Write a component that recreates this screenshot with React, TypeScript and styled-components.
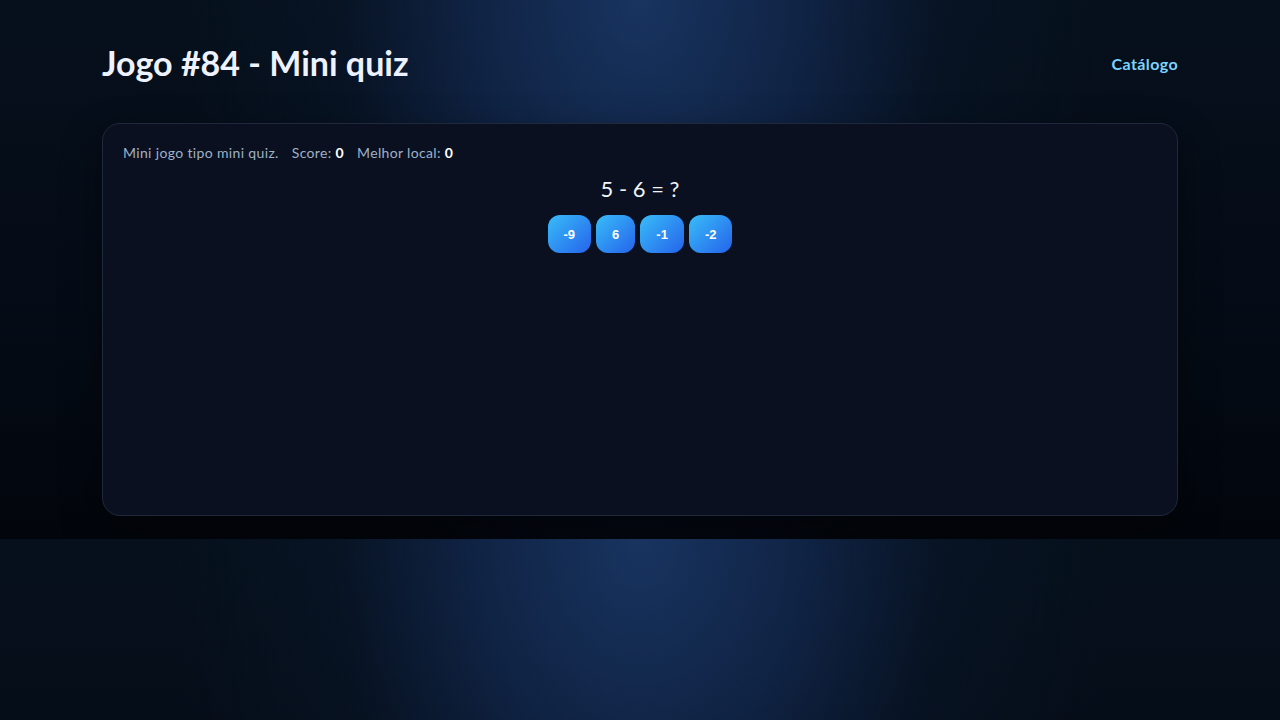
import * as React from "react";
import styled, { createGlobalStyle } from "styled-components";

const GlobalStyle = createGlobalStyle`
  html, body {
    margin: 0;
    padding: 0;
  }
  body {
    background-color: #050c17;
    background-image:
      radial-gradient(ellipse 470px 620px at 50% 0%, rgba(24, 52, 96, 1) 0%, rgba(18, 40, 78, 0.8) 35%, rgba(10, 24, 46, 0.4) 65%, rgba(5, 12, 23, 0) 100%),
      linear-gradient(180deg, #06101c 0%, #040a14 70%, #02050b 100%);
    color: #e2e8f0;
    font-family: Lato, "Noto Sans", sans-serif;
  }
`;

const options = ["-9", "6", "-1", "-2"];

export default function App() {
  return (
    <>
      <GlobalStyle />
      <Page>
        <Header>
          <Title>Jogo #84 - Mini quiz</Title>
          <CatalogLink href="#">Catálogo</CatalogLink>
        </Header>
        <Card>
          <Stats>
            <span>Mini jogo tipo mini quiz.</span>
            <span>
              Score: <Strong>0</Strong>
            </span>
            <span>
              Melhor local: <Strong>0</Strong>
            </span>
          </Stats>
          <Question>5 - 6 = ?</Question>
          <Options>
            {options.map((o) => (
              <OptionButton key={o}>{o}</OptionButton>
            ))}
          </Options>
        </Card>
      </Page>
    </>
  );
}

const Page = styled.div`
  max-width: 1076px;
  margin: 0 auto;
  padding: 44px 0 23px;
`;

const Header = styled.header`
  display: flex;
  align-items: center;
  justify-content: space-between;
  height: 38px;
  margin-bottom: 41px;
`;

const Title = styled.h1`
  margin: 0;
  font-size: 34px;
  font-weight: 700;
  color: #eef2ff;
  line-height: 38px;
`;

const CatalogLink = styled.a`
  color: #7dd3fc;
  font-size: 16px;
  font-weight: 700;
  letter-spacing: 0.4px;
  text-decoration: none;
`;

const Card = styled.section`
  box-sizing: border-box;
  min-height: 393px;
  padding: 19px 20px 20px;
  background: #0a1020;
  border: 1px solid #1e293b;
  border-radius: 18px;
  box-shadow: 0 16px 40px rgba(0, 0, 0, 0.45);
`;

const Stats = styled.div`
  display: flex;
  gap: 13px;
  font-size: 14px;
  letter-spacing: 0.35px;
  line-height: 20px;
  color: #9fb0c8;
`;

const Strong = styled.b`
  color: #ffffff;
`;

const Question = styled.div`
  margin: 13px 0 13px;
  text-align: center;
  font-size: 22px;
  line-height: 26px;
  color: #f1f5f9;
`;

const Options = styled.div`
  display: flex;
  justify-content: center;
  gap: 5px;
`;

const OptionButton = styled.button`
  height: 38px;
  padding: 0 16px;
  border: none;
  border-radius: 12px;
  background: linear-gradient(135deg, #38bdf8, #2563eb);
  color: #ffffff;
  font-family: "Liberation Sans", Arial, sans-serif;
  font-size: 13px;
  font-weight: 700;
  cursor: pointer;
`;
